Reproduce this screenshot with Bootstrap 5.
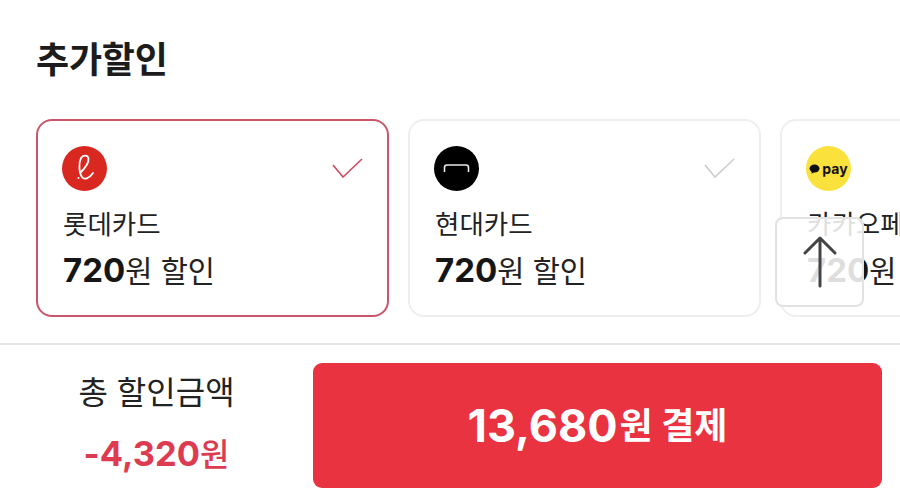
<!DOCTYPE html>
<html lang="ko">
<head>
<meta charset="utf-8">
<title>추가할인</title>
<link rel="stylesheet" href="https://cdn.jsdelivr.net/npm/bootstrap@5.3.0/dist/css/bootstrap.min.css">
<style>
html,body{height:489px;overflow:hidden;background:#fff;}
body{font-family:Inter,"Noto Sans CJK KR",sans-serif;color:#1a1a1a;}
.page-shell{height:489px;}
.top-area{padding:38px 0 0 36px;height:343px;overflow:hidden;}
.sec-title{font-size:36px;line-height:44px;font-weight:700;margin:0 0 37px 0;letter-spacing:-.2px;color:#1c1c1c;}
.cards-row{gap:19px;width:1200px;}
.pay-card{width:353px;height:198px;border:2px solid #eeeeee;border-radius:16px;padding:25px 24px 0 24px;background:#fff;flex:none;}
.pay-card.is-on{border-color:#c9566a;}
.logo-dot{width:45px;height:45px;border-radius:50%;display:flex;align-items:center;justify-content:center;flex:none;}
.logo-lotte{background:#d9281f;}
.logo-hd{background:#000;}
.logo-kp{background:#fbe13c;color:#111;font-size:14px;font-weight:700;gap:2px;}
.check-mark{margin-top:12px;}
.card-name{font-size:26.5px;line-height:36px;margin:15px 0 0 1px;color:#222;}
.card-off{font-size:29.5px;line-height:40px;margin:8px 0 0 1px;color:#222;}
.card-off b{font-weight:700;color:#161616;font-size:33px;}
.up-btn{position:absolute;left:775px;top:217px;width:89px;height:90px;border:2px solid #e2e2e2;border-radius:8px;background:rgba(255,255,255,.86);display:flex;align-items:center;justify-content:center;}
.bottom-bar{height:146px;border-top:2px solid #e4e4e4;padding:18px 18px 0 0;}
.sum-box{width:313px;flex:none;text-align:center;}
.sum-label{font-size:32px;line-height:40px;margin-top:10px;color:#222;}
.sum-val{font-size:34.5px;line-height:44px;margin-top:19px;font-weight:700;color:#dd3c50;}
.sum-val span{font-weight:500;font-size:32px;}
.pay-btn{width:569px;height:125px;flex:none;background:#e93340;border:0;border-radius:9px;color:#fff;font-size:45px;font-weight:700;display:flex;align-items:center;justify-content:center;padding:0;}
.pay-btn span{font-size:36px;margin-left:2px;}
.pay-btn:hover,.pay-btn:active{background:#e93340!important;color:#fff!important;}
</style>
</head>
<body>
<div class="page-shell position-relative">
  <div class="top-area">
    <h2 class="sec-title">추가할인</h2>
    <div class="cards-row d-flex">
      <div class="pay-card is-on">
        <div class="d-flex justify-content-between align-items-start">
          <div class="logo-dot logo-lotte">
            <svg width="45" height="45" viewBox="0 0 45 45" fill="none" stroke="#fff" stroke-width="1.8" stroke-linecap="round"><path d="M19 26C23 22 27 17 26.500 12.500C26 9 21 8.500 19 12C16.500 17 17 27 20 31C22 34 27 33 31 27"/><circle cx="16.500" cy="32" r="1" fill="#fff" stroke="none"/></svg>
          </div>
          <svg class="check-mark" width="31" height="20" viewBox="0 0 31 20" fill="none" stroke="#cf4a5f" stroke-width="1.6"><path d="M1 7L11 19L30 1"/></svg>
        </div>
        <div class="card-name">롯데카드</div>
        <div class="card-off"><b>720</b>원 할인</div>
      </div>
      <div class="pay-card">
        <div class="d-flex justify-content-between align-items-start">
          <div class="logo-dot logo-hd">
            <svg width="45" height="45" viewBox="0 0 45 45" fill="none" stroke="#e8e8e8" stroke-width="1.6"><path d="M10.500 26V21.500Q10.500 19 13 19H32Q34.500 19 34.500 21.500V26"/></svg>
          </div>
          <svg class="check-mark" width="31" height="20" viewBox="0 0 31 20" fill="none" stroke="#cccccc" stroke-width="1.6"><path d="M1 7L11 19L30 1"/></svg>
        </div>
        <div class="card-name">현대카드</div>
        <div class="card-off"><b>720</b>원 할인</div>
      </div>
      <div class="pay-card">
        <div class="d-flex justify-content-between align-items-start">
          <div class="logo-dot logo-kp">
            <svg width="11" height="10" viewBox="0 0 11 10"><ellipse cx="5.500" cy="4.500" rx="5" ry="4" fill="#111"/><path d="M3 7L2.500 9.800L5.500 8Z" fill="#111"/></svg><span>pay</span>
          </div>
        </div>
        <div class="card-name">카카오페이</div>
        <div class="card-off"><b>720</b>원 할인</div>
      </div>
    </div>
  </div>
  <div class="up-btn">
    <svg width="34" height="54" viewBox="0 0 34 54" fill="none" stroke="#444" stroke-width="3" stroke-linecap="round" stroke-linejoin="round"><path d="M17 51V3M2 18L17 3L32 18"/></svg>
  </div>
  <div class="bottom-bar d-flex">
    <div class="sum-box">
      <div class="sum-label">총 할인금액</div>
      <div class="sum-val">-4,320<span>원</span></div>
    </div>
    <button type="button" class="btn pay-btn">13,680<span>원 결제</span></button>
  </div>
</div>
<script src="https://cdn.jsdelivr.net/npm/bootstrap@5.3.0/dist/js/bootstrap.bundle.min.js"></script>
</body>
</html>
